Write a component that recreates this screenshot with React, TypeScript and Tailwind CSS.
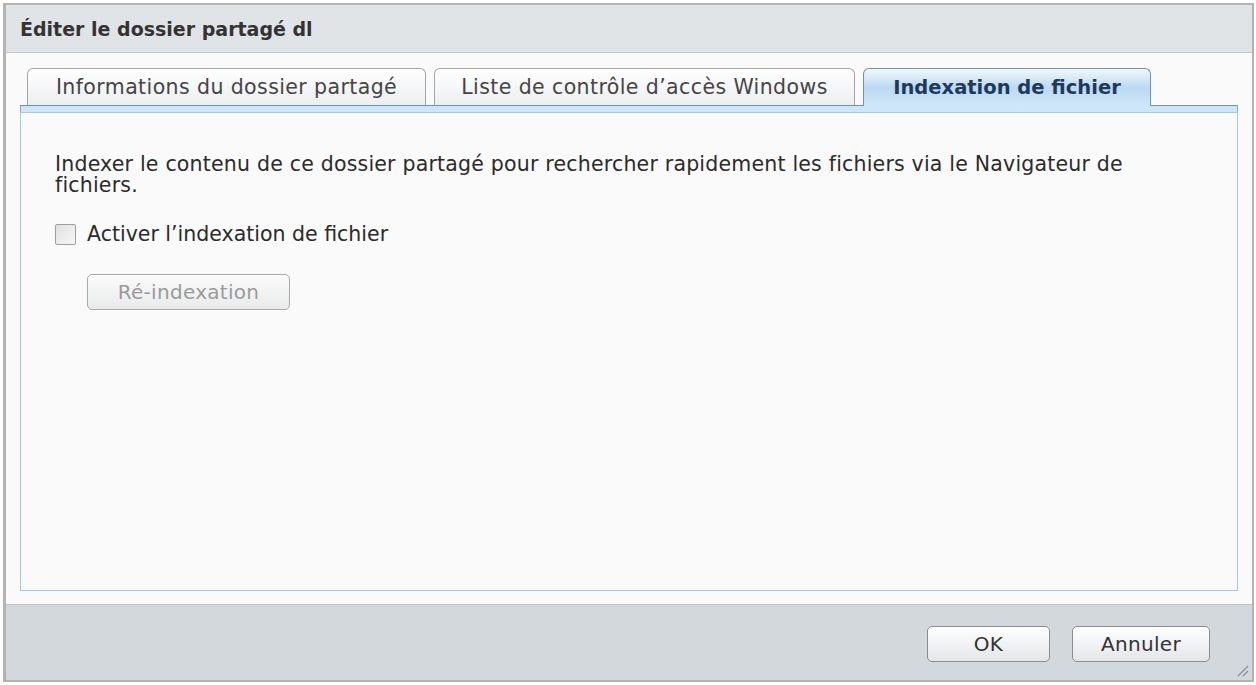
const font = { fontFamily: '"DejaVu Sans", Verdana, sans-serif' };

function Tab({ label, width, active }: { label: string; width: string; active?: boolean }) {
  if (active) {
    return (
      <div
        className={`${width} relative -mb-px h-[38px] rounded-t-[6px] border border-b-0 border-[#6f91b2] bg-gradient-to-b from-[#f1f8fe] via-[#bcdaf2] to-[#cfe7f9] flex items-center justify-center text-[19.5px] font-bold text-[#1d3a5e] z-10`}
      >
        {label}
      </div>
    );
  }
  return (
    <div
      className={`${width} h-[37px] rounded-t-[6px] border border-b-0 border-[#a5a5a5] bg-gradient-to-b from-white to-[#eceef0] flex items-center justify-center text-[20.5px] tracking-[0.4px] text-[#454545]`}
    >
      {label}
    </div>
  );
}

function Button({ label, width, disabled }: { label: string; width: string; disabled?: boolean }) {
  return (
    <button
      className={`${width} h-[36px] rounded-[5px] border bg-gradient-to-b text-[20px] tracking-[0.3px] ${
        disabled
          ? 'border-[#a9a9a9] from-[#fbfbfb] to-[#e9eaeb] text-[#9b9b9b]'
          : 'border-[#8c8c8c] from-white to-[#e4e6e8] text-[#333]'
      }`}
    >
      {label}
    </button>
  );
}

export default function App() {
  return (
    <div className="w-[1256px] h-[685px] bg-white pt-[3px] pl-[3px]" style={font}>
      <div className="relative w-[1251px] h-[679px] border-2 border-l-[3px] border-[#b3b3b3] flex flex-col bg-[#fafafa]">
        {/* Title bar */}
        <div className="h-[48px] shrink-0 bg-[#e1e4e7] border-b border-[#c4c6c8] flex items-center pl-[14px] pt-[2px] text-[19px] font-bold text-[#333]">
          Éditer le dossier partagé dl
        </div>

        {/* Body */}
        <div className="flex-1 flex flex-col px-[14px] pt-[15px] pb-[13px]">
          <div className="flex items-end gap-[8px] pl-[7px]">
            <Tab label="Informations du dossier partagé" width="w-[399px]" />
            <Tab label="Liste de contrôle d’accès Windows" width="w-[421px]" />
            <Tab label="Indexation de fichier" width="w-[288px]" active />
          </div>
          <div className="h-[7px] shrink-0 bg-[#cde6f9] border border-b-0 border-t-[#6f91b2] border-x-[#86aacb]" />
          <div className="flex-1 border border-t-[#a9c8e3] border-[#a6c6e2] bg-[#fafafa] pl-[34px] pt-[41px] text-[20.5px] tracking-[0.2px] text-[#2b2b2b]">
            <p className="max-w-[1100px] leading-[21px]">
              Indexer le contenu de ce dossier partagé pour rechercher rapidement les fichiers via le Navigateur de fichiers.
            </p>
            <label className="mt-[28px] flex items-center gap-[11px] leading-[21px] tracking-normal">
              <span className="w-[21px] h-[21px] rounded-[2px] border border-[#9e9e9e] bg-gradient-to-br from-[#e0e0e0] to-[#f7f7f7]" />
              Activer l’indexation de fichier
            </label>
            <div className="mt-[29px] pl-[32px]">
              <Button label="Ré-indexation" width="w-[203px]" disabled />
            </div>
          </div>
        </div>

        {/* Footer */}
        <div className="h-[76px] shrink-0 bg-[#d3d8dc] border-t border-[#bfc3c6] flex items-start justify-end gap-[22px] pt-[21px] pr-[42px]">
          <Button label="OK" width="w-[123px]" />
          <Button label="Annuler" width="w-[138px]" />
        </div>

        <svg className="absolute right-[3px] bottom-[3px]" width="14" height="14" viewBox="0 0 14 14">
          <path d="M13 3 L3 13 M13 8 L8 13" stroke="#8a8d90" strokeWidth="1.2" fill="none" />
        </svg>
      </div>
    </div>
  );
}
